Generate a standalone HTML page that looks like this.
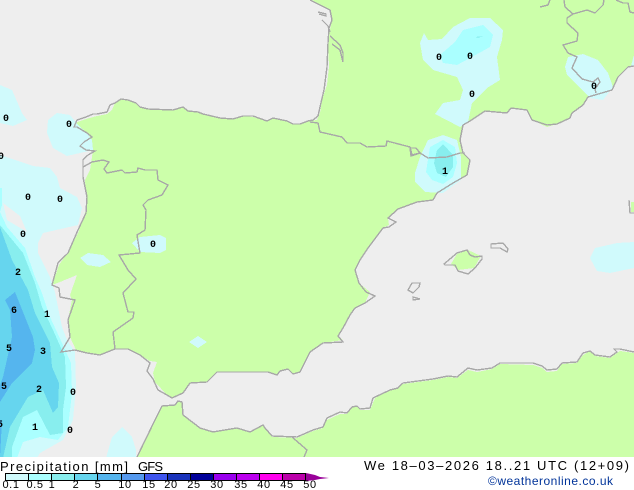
<!DOCTYPE html>
<html><head><meta charset="utf-8"><style>
html,body{margin:0;padding:0;background:#fff}
svg{display:block}
text{font-family:"Liberation Sans",sans-serif}
.n{font:bold 10px "Liberation Mono",monospace;fill:#000;text-anchor:middle}
.b{font-size:11px;fill:#000;text-anchor:middle;letter-spacing:.6px}
</style></head><body>
<svg width="634" height="490" viewBox="0 0 634 490" xmlns="http://www.w3.org/2000/svg">
<rect width="634" height="490" fill="#eeeeee"/>
<g shape-rendering="crispEdges">
<g fill="#ccffaa">
<polygon points="312,0 330,10 332,20 330,30 328,43 329,67 327,85 322,100 320,113 317,120 308,121 300,124 293,124 287,121 273,118 267,121 253,117 243,116 233,119 220,118 203,114 198,112 188,110 183,107 173,110 148,109 140,107 136,103 128,100 121,99 115,103 112,110 107,114 97,116 86,119 77,122 76,127 85,133 92,140 93,150 90,170 85,180 87,207 78,233 68,252 59,265 52,285 60,282 77,275 70,295 72,300 68,320 70,337 76,350 87,353 100,355 115,349 128,349 140,355 150,361 157,362 153,373 155,382 167,395 172,398 183,393 190,383 207,382 217,372 268,372 277,375 280,371 288,369 293,374 300,372 310,352 323,343 343,340 338,336 343,328 350,315 355,308 365,303 370,292 359,283 355,270 360,260 368,248 383,228 389,225 388,218 398,209 417,202 433,200 437,193 453,183 467,175 470,160 463,153 460,140 463,125 470,121 485,111 507,113 511,108 527,110 532,120 547,127 557,124 570,118 572,113 583,105 588,97 612,88 620,75 628,67 634,66 634,0"/>
<polygon points="137,457 155,420 162,406 175,405 178,401 182,402 183,415 200,428 213,432 237,428 250,432 263,425 272,437 297,438 313,431 323,428 327,420 340,414 347,414 352,408 357,406 360,410 370,410 375,398 390,390 398,388 403,384 433,380 448,377 457,378 468,370 477,372 492,369 500,364 533,365 542,368 547,372 557,371 562,364 577,363 583,355 590,351 595,356 610,358 620,351 634,353 634,458 137,458"/>
<polygon points="451,264 457,254 468,250 481,256 474,268 458,270"/>
<polygon points="631,202 634,202 634,212 631,212"/>
</g>
<g fill="#d0fafc">
<polygon points="0,85 12,90 22,113 27,120 13,126 0,123"/>
<polygon points="48,120 57,113 70,115 78,125 87,133 92,140 93,150 67,156 53,148 47,133"/>
<polygon points="0,155 33,166 50,168 57,177 60,188 77,197 82,208 78,225 43,233 38,243 38,253 50,277 55,292 62,327 67,340 75,352 76,387 73,420 63,440 40,453 37,458 0,458"/>
<polygon points="106,458 112,437 122,427 132,437 136,450 136,458"/>
<polygon points="80,258 88,253 103,255 111,262 100,267 87,265"/>
<polygon points="132,243 140,237 160,235 166,238 166,250 160,253 140,252"/>
<polygon points="189,342 198,336 207,342 198,348"/>
<polygon points="420,43 424,33 428,40 442,39 453,27 470,18 490,18 503,30 502,40 497,57 500,80 487,88 472,103 468,122 460,127 435,114 443,103 460,100 463,90 457,77 433,70 423,60"/>
<polygon points="415,173 420,157 428,140 443,135 457,140 461,157 461,180 443,193 425,192 415,182"/>
<polygon points="565,67 568,57 583,54 598,60 608,73 613,87 603,100 590,98 577,85 567,75"/>
<polygon points="590,258 595,248 617,243 634,242 634,268 610,273 597,271"/>
<polygon points="631,66 634,55 634,66"/>
</g>
<polygon fill="#eeeeee" points="3,203 20,216 27,232 17,226 7,220"/>
<polygon fill="#eeeeee" points="0,165 3,165 3,203 0,188" opacity="0"/>
<g fill="#aaffff">
<polygon points="0,188 2,188 2,205 0,212"/>
<polygon points="0,212 7,227 25,248 35,277 42,293 50,317 62,343 71,363 72,393 68,427 58,440 40,437 23,442 17,458 0,458"/>
<polygon points="440,55 455,42 463,30 483,25 493,35 490,47 470,58 457,65 443,63"/>
<polygon points="426,172 430,147 443,140 455,147 457,163 453,177 443,184 432,180"/>
</g>
<g fill="#88eeee">
<polygon points="0,225 23,253 35,283 42,307 53,330 65,357 66,387 63,410 63,433 50,435 37,410 23,417 12,447 12,458 0,458"/>
<polygon points="434,163 437,150 443,144 453,155 453,167 446,177 437,173"/>
<polygon points="475,37 483,36 478,38"/>
</g>
<polygon fill="#66d5ee" points="0,227 12,260 28,290 35,313 50,343 52,367 59,383 58,407 53,413 43,390 28,397 10,427 3,458 0,458"/>
<polygon fill="#55b5ee" points="5,300 15,292 33,337 35,350 32,363 12,383 0,402 0,385 3,377 12,337 10,310"/>
<polygon fill="#55b5ee" points="0,420 2,420 0,458"/>
</g>
<g fill="none" stroke="#a8a8a8" stroke-width="1.4" shape-rendering="crispEdges">
<polyline points="310,0 320,5 330,10 332,20 329,28 328,43 327,67 324,90 320,107 318,116 313,120 308,121 300,124 293,124 287,121 273,118 267,121 253,116 243,116 233,119 220,118 203,114 198,112 188,111 183,107 173,110 148,109 140,107 136,103 128,100 121,99 115,103 110,105 107,112 97,114 93,114 86,117 77,120 74,127 77,127 87,133 92,137 84,142 80,146 86,150 95,151 88,155 83,160 83,177 87,197 86,213 78,230 68,253 58,263 52,285 59,288 60,297 75,300 68,320 70,337 61,352 75,350 87,353 100,355 115,349 128,349 140,355 150,363 147,371 153,379 158,390 167,395 172,398 183,393 190,383 207,382 217,372 268,372 277,375 280,371 288,369 293,374 300,372 310,352 323,343 343,342 338,336 343,328 350,315 355,308 365,303 375,296 366,292 359,283 355,270 360,260 368,248 383,228 389,227 396,222 388,218 398,209 417,202 433,200 437,193 453,183 467,175 470,160 463,153 460,140 463,125 470,121 485,111 507,113 511,108 527,110 532,120 547,125 557,124 570,118 572,113 583,105 588,97 612,90 618,77 628,67 634,66"/>
<polyline points="137,457 155,420 162,406 175,405 178,401 182,402 183,415 200,428 213,432 237,428 250,432 263,425 265,428 272,436 297,437 313,430 323,427 327,418 340,412 347,413 352,407 357,406 360,409 370,408 373,398 390,390 398,388 403,383 433,379 448,376 457,377 468,368 477,370 492,368 500,363 533,363 542,366 547,370 557,369 562,363 577,362 583,353 590,351 595,355 610,357 617,352 614,349 620,349 634,352"/>
<polyline points="292,437 307,450 304,457"/>
<polyline points="83,167 92,162 103,160 109,162 104,169 107,173 122,170 125,173 137,172 138,168 145,170 157,170 158,180 168,185 162,195 148,200 143,205 146,210 145,230 137,235 140,253 119,255 128,270 136,279 123,293 128,312 134,312 133,318 113,332 115,349"/>
<polyline points="310,122 318,123 320,132 342,137 347,143 360,143 367,147 386,146 387,141 410,147 412,155 420,153 428,158 447,157 460,153 465,153"/>
<polyline points="410,148 411,156 420,153 416,148 410,148"/>
<polyline points="564,0 565,7 573,14 587,10 595,13 603,5 604,0"/>
<polyline points="573,14 567,18 567,23 578,33 577,41 563,45 568,53 577,57 572,68 582,79 593,82 598,78 600,82 595,89 596,93"/>
<polyline points="616,0 623,3 628,3 630,12 634,13"/>
<polyline points="540,7 548,5 550,0"/>
<polyline points="318,12 326,14 326,16 319,14"/>
<polyline points="322,20 328,26 330,32"/>
<polyline points="330,36 340,45 343,53 343,62 340,50 332,44"/>
<polygon points="444,264 457,253 467,250 470,255 475,257 482,256 482,259 475,268 468,274 458,271 455,265 445,265"/>
<polygon points="491,244 503,243 508,249 507,252 500,248 491,248"/>
<polygon points="408,290 412,283 420,283 419,287 413,293"/>
<polygon points="413,297 420,299 413,300"/>
<polyline points="629,200 630,213 634,213"/>
</g>
<g class="nums">
<text class="n" x="6" y="121">0</text><text class="n" x="69" y="127">0</text><text class="n" x="1" y="159">0</text><text class="n" x="28" y="200">0</text><text class="n" x="60" y="202">0</text><text class="n" x="23" y="237">0</text><text class="n" x="153" y="247">0</text><text class="n" x="18" y="275">2</text><text class="n" x="14" y="313">6</text><text class="n" x="47" y="317">1</text><text class="n" x="9" y="351">5</text><text class="n" x="43" y="354">3</text><text class="n" x="4" y="389">5</text><text class="n" x="39" y="392">2</text><text class="n" x="73" y="395">0</text><text class="n" x="0" y="427">5</text><text class="n" x="35" y="430">1</text><text class="n" x="70" y="433">0</text><text class="n" x="439" y="60">0</text><text class="n" x="470" y="59">0</text><text class="n" x="472" y="97">0</text><text class="n" x="445" y="174">1</text><text class="n" x="594" y="89">0</text>
</g>
<rect x="0" y="457" width="634" height="33" fill="#ffffff"/>
<text x="0" y="471" font-size="13" textLength="128" lengthAdjust="spacing" fill="#000">Precipitation [mm]</text>
<text x="138" y="471" font-size="13" textLength="25" lengthAdjust="spacing" fill="#000">GFS</text>
<g shape-rendering="crispEdges" stroke="#000" stroke-width="1">
<rect x="5.5" y="473.5" width="23" height="7" fill="#d0fafc"/>
<rect x="28.5" y="473.5" width="23" height="7" fill="#aaffff"/>
<rect x="51.5" y="473.5" width="23" height="7" fill="#88eeee"/>
<rect x="74.5" y="473.5" width="23" height="7" fill="#66d5ee"/>
<rect x="97.5" y="473.5" width="24" height="7" fill="#55b5ee"/>
<rect x="121.5" y="473.5" width="23" height="7" fill="#5599ee"/>
<rect x="144.5" y="473.5" width="23" height="7" fill="#3f55ee"/>
<rect x="167.5" y="473.5" width="23" height="7" fill="#1a33bb"/>
<rect x="190.5" y="473.5" width="23" height="7" fill="#000099"/>
<rect x="213.5" y="473.5" width="23" height="7" fill="#9900ee"/>
<rect x="236.5" y="473.5" width="23" height="7" fill="#bb00ee"/>
<rect x="259.5" y="473.5" width="23" height="7" fill="#ff00ee"/>
<rect x="282.5" y="473.5" width="23" height="7" fill="#bb00aa"/>
</g>
<polygon points="306,473 315,475 320,477 329,478 320,479 315,480 306,481" fill="#990099"/>
<text class="b" x="11" y="488">0.1</text><text class="b" x="35" y="488">0.5</text><text class="b" x="52" y="488">1</text><text class="b" x="76" y="488">2</text><text class="b" x="98" y="488">5</text><text class="b" x="125" y="488">10</text><text class="b" x="149" y="488">15</text><text class="b" x="171" y="488">20</text><text class="b" x="194" y="488">25</text><text class="b" x="217" y="488">30</text><text class="b" x="241" y="488">35</text><text class="b" x="264" y="488">40</text><text class="b" x="287" y="488">45</text><text class="b" x="310" y="488">50</text>
<text x="364" y="470" font-size="13" textLength="265" lengthAdjust="spacing" fill="#000">We 18–03–2026 18..21 UTC (12+09)</text>
<text x="488" y="485" font-size="12" textLength="125" lengthAdjust="spacing" fill="#003399">©weatheronline.co.uk</text>
</svg>
</body></html>
